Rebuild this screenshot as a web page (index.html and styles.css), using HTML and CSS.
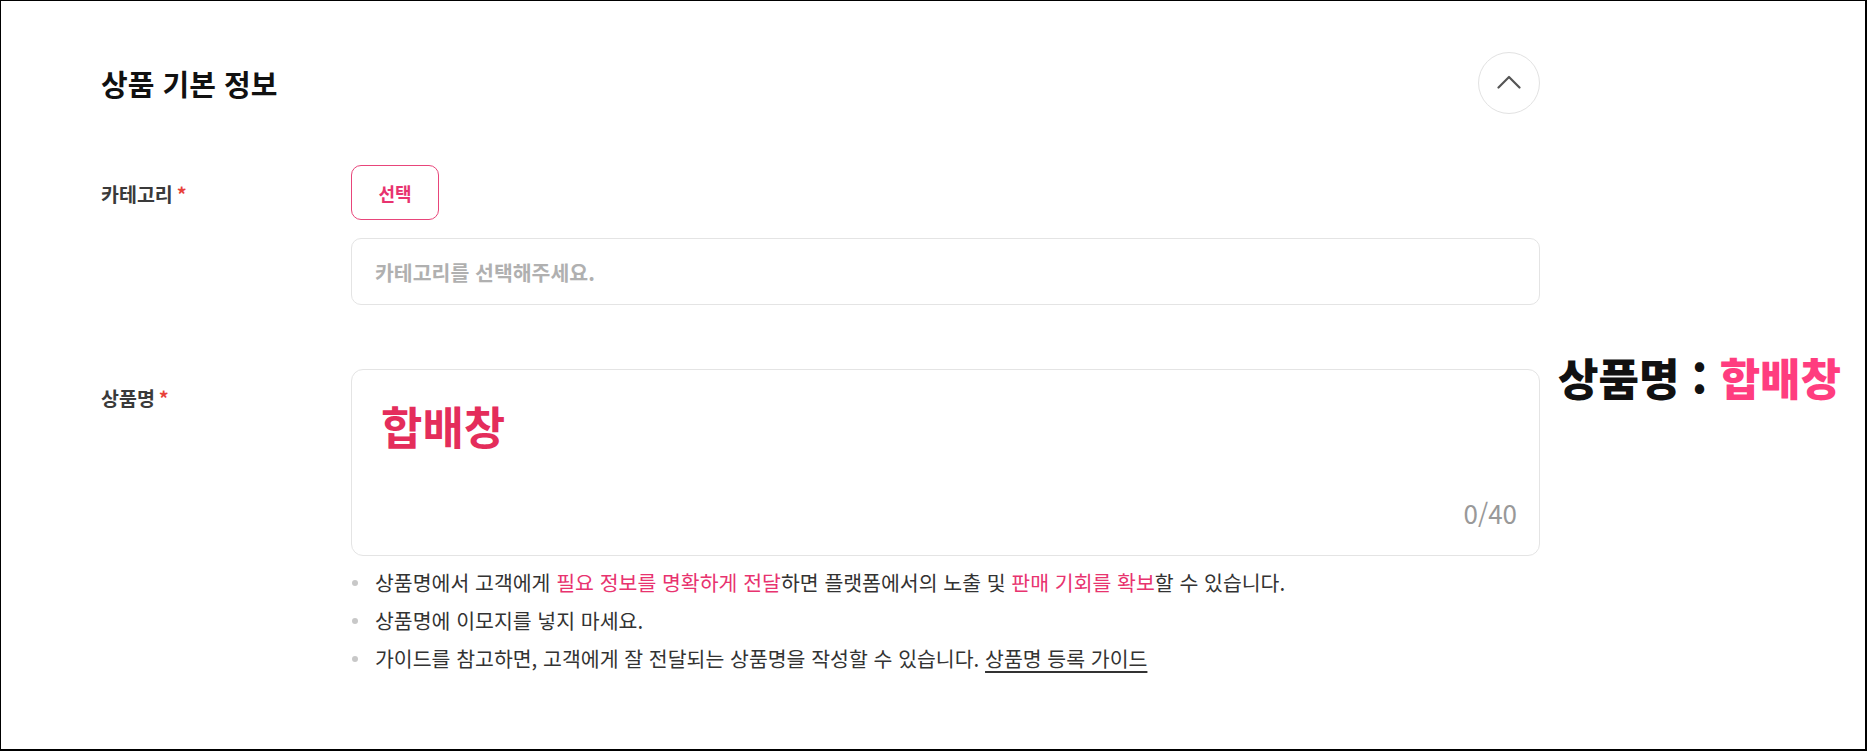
FILE: index.html
```html
<!DOCTYPE html>
<html lang="ko">
<head>
  <meta charset="UTF-8" />
  <meta name="viewport" content="width=device-width, initial-scale=1.0"/>
  <title>상품 기본 정보</title>
  <link rel="stylesheet" href="styles.css">
</head>
<body>
  <div class="frame">
    <section class="section">
      <div class="section-head">
        <h2>상품 기본 정보</h2>
        <button class="collapse" aria-label="접기">
          <svg width="24" height="14" viewBox="0 0 24 14">
            <path d="M1.5 12.5 L12 2 L22.5 12.5" fill="none" stroke="#555" stroke-width="2.2" stroke-linecap="round" stroke-linejoin="round"/>
          </svg>
        </button>
      </div>

      <div class="row">
        <div class="label">카테고리<span class="req">*</span></div>
        <div class="field">
          <button class="btn-select">선택</button>
          <div class="category-box">카테고리를 선택해주세요.</div>
        </div>
      </div>

      <div class="row row-name">
        <div class="label">상품명<span class="req">*</span></div>
        <div class="field">
          <div class="name-box">
            <div class="name-value">합배창</div>
            <div class="counter">0/40</div>
          </div>
          <ul class="guide">
            <li>상품명에서 고객에게 <em>필요 정보를 명확하게 전달</em>하면 플랫폼에서의 노출 및 <em>판매 기회를 확보</em>할 수 있습니다.</li>
            <li>상품명에 이모지를 넣지 마세요.</li>
            <li>가이드를 참고하면, 고객에게 잘 전달되는 상품명을 작성할 수 있습니다. <a href="#">상품명 등록 가이드</a></li>
          </ul>
        </div>
      </div>
    </section>

    <div class="note">상품명 : <span>합배창</span></div>
  </div>
</body>
</html>
```

FILE: styles.css
```css
:root {
  --pink: #e8336f;
  --crimson: #e42d5b;
  --line: #e4e4e4;
  --text: #333;
}

* {
  box-sizing: border-box;
}

body {
  margin: 0;
  background: #fff;
  font-family: "Noto Sans CJK KR", "Noto Sans", sans-serif;
  color: var(--text);
}

.frame {
  position: relative;
  width: 1867px;
  height: 751px;
  border: 1px solid #000;
  border-right-width: 2px;
  border-bottom-width: 2px;
  padding-left: 100px;
}

.section {
  width: 1439px;
}

.section-head {
  display: flex;
  justify-content: space-between;
  align-items: center;
  margin-top: 51px;
  height: 62px;
}

.section-head h2 {
  margin: 0;
  font-size: 29px;
  font-weight: 700;
  color: #111;
}

.collapse {
  width: 62px;
  height: 62px;
  border-radius: 50%;
  border: 1px solid #e2e2e2;
  background: #fff;
  display: flex;
  align-items: center;
  justify-content: center;
  padding: 0 0 3px;
  cursor: pointer;
}

.row {
  display: grid;
  grid-template-columns: 250px 1fr;
  margin-top: 51px;
}

.row-name {
  margin-top: 64px;
}

.label {
  padding-top: 16px;
  font-size: 19.5px;
  line-height: 26px;
  font-weight: 700;
  color: #3a3a3a;
}

.req {
  color: #e8413a;
  margin-left: 4px;
}

.btn-select {
  display: block;
  width: 88px;
  height: 55px;
  border: 1.5px solid #e8457a;
  border-radius: 10px;
  background: #fff;
  color: var(--pink);
  font-family: inherit;
  font-size: 18px;
  font-weight: 700;
  cursor: pointer;
}

.category-box {
  margin-top: 18px;
  height: 67px;
  border: 1px solid var(--line);
  border-radius: 10px;
  padding: 0 23px;
  display: flex;
  align-items: center;
  font-size: 20.5px;
  font-weight: 700;
  color: #b0b0b0;
}

.name-box {
  height: 187px;
  border: 1px solid var(--line);
  border-radius: 12px;
  padding: 30px 22px 27px 29px;
  display: flex;
  flex-direction: column;
  justify-content: space-between;
}

.name-value {
  font-size: 45px;
  line-height: 52px;
  font-weight: 700;
  color: var(--crimson);
}

.counter {
  align-self: flex-end;
  font-size: 26px;
  line-height: 30px;
  color: #999;
}

.guide {
  list-style: none;
  margin: 7px 0 0;
  padding: 0;
}

.guide li {
  position: relative;
  padding-left: 24px;
  font-size: 20.5px;
  line-height: 38px;
  color: var(--text);
}

.guide li::before {
  content: "";
  position: absolute;
  left: 1px;
  top: 17px;
  width: 6px;
  height: 6px;
  border-radius: 50%;
  background: #c8c8c8;
}

.guide em {
  font-style: normal;
  color: var(--pink);
}

.guide a {
  color: var(--text);
  text-decoration: underline;
  text-underline-offset: 4px;
}

.note {
  position: absolute;
  left: 1557px;
  top: 348px;
  font-size: 44px;
  line-height: 56px;
  font-weight: 900;
  color: #111;
}

.note span {
  color: #ff3d7f;
}
```
